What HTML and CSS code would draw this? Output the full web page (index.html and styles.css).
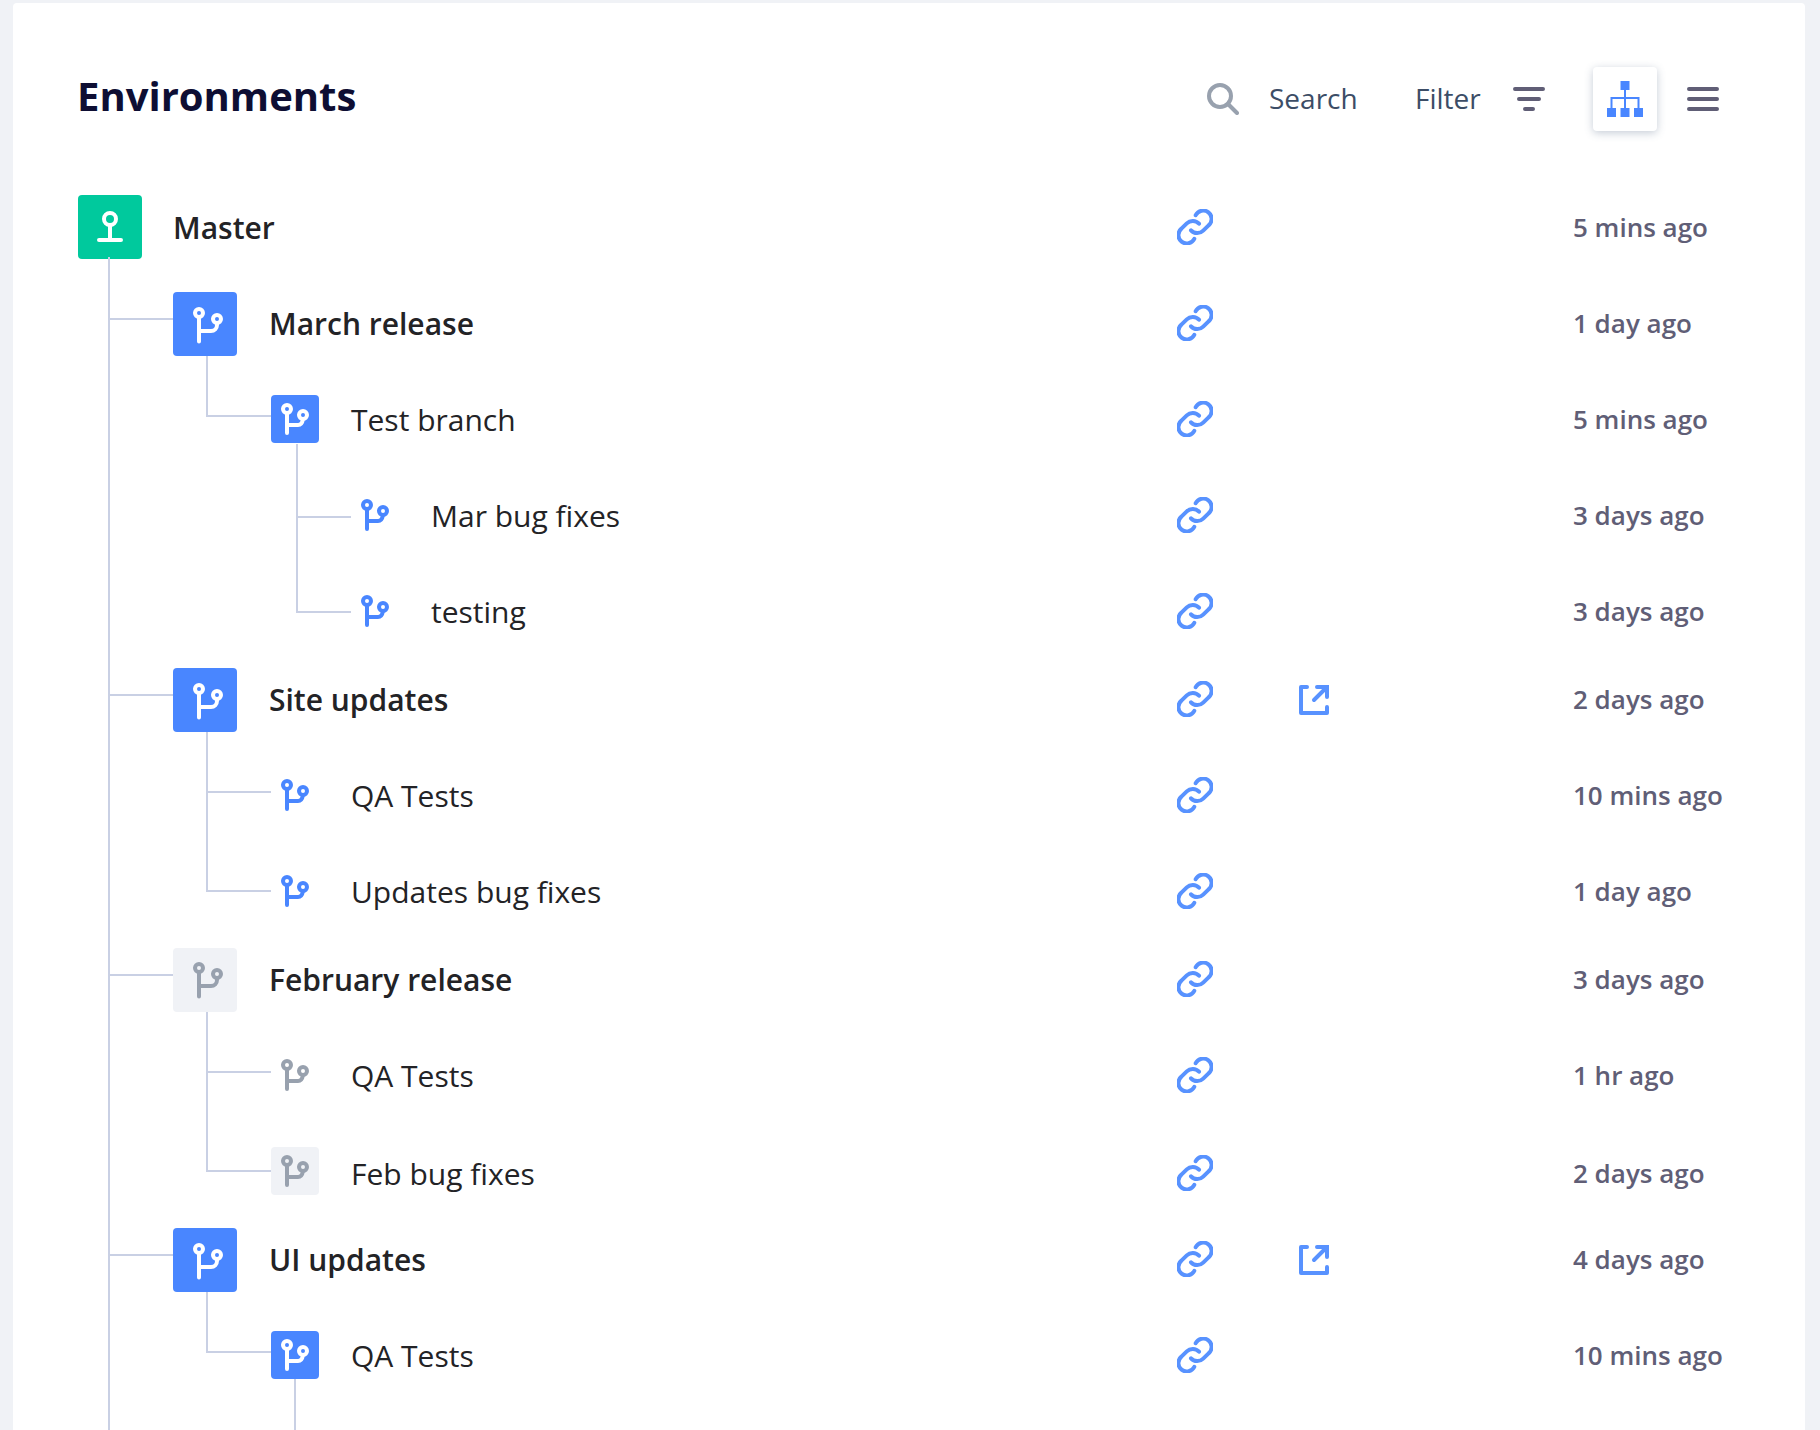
FILE: index.html
```html
<!DOCTYPE html>
<html lang="en">
<head>
<meta charset="utf-8">
<title>Environments</title>
<link rel="stylesheet" href="styles.css">
</head>
<body>
<svg class="sprite" aria-hidden="true">
  <symbol id="branch-lg" viewBox="0 0 64 64"><circle cx="26" cy="21" r="4"/><circle cx="44" cy="27" r="4"/><path d="M26 25v24.500M44 31v2a6 6 0 0 1-6 6H26"/></symbol>
  <symbol id="branch" viewBox="0 0 48 48"><circle cx="16" cy="14" r="4"/><circle cx="32" cy="20" r="4"/><path d="M16 18v20M32 24c-.6 3.800-2 6-5 6H16"/></symbol>
  <symbol id="root" viewBox="0 0 64 64"><circle cx="32" cy="24" r="6"/><path d="M32 30v15M21 45h22"/></symbol>
  <symbol id="link" viewBox="0 0 36 36"><path d="M18.700 6.200A8.400 8.400 0 1 1 31.600 16.400L26.200 21.600A8.400 8.400 0 0 1 14 21.300M17.300 29.800A8.400 8.400 0 1 1 4.400 19.600L9.800 14.400A8.400 8.400 0 0 1 22 14.700"/></symbol>
  <symbol id="open" viewBox="0 0 30 30"><path d="M8 2H2v26h26v-6"/><path class="sharp" d="M18 2h10v10M27 3L15 15"/></symbol>
</svg>

<main class="card">
  <header class="header">
    <h1 class="title">Environments</h1>
    <div class="tools">
      <svg class="icon search-icon" width="32" height="32"><circle cx="13" cy="13" r="11"/><path d="M21 21l9 9"/></svg>
      <span class="tool-label search-label">Search</span>
      <span class="tool-label filter-label">Filter</span>
      <svg class="icon bars filter-icon" width="32" height="24"><path d="M2 2h28M6 12h20M12 22h8"/></svg>
      <button class="view-button" aria-label="Tree view">
        <svg width="36" height="36"><path class="nodes" d="M13.500 0h9v9h-9zM0 27h9v9H0zM13.500 27h9v9h-9zM27 27h9v9h-9z"/><path class="wires" d="M18 9v18M4.500 27V17h27v10"/></svg>
      </button>
      <svg class="icon bars" width="32" height="24"><path d="M2 2h28M2 12h28M2 22h28"/></svg>
    </div>
  </header>

  <div class="tree">
    <svg class="connectors" width="360" height="1251"><path d="M96 78V1251M96 140h64M96 516h64M96 796h64M96 1076h64M194 177v60h64M194 553v159h64M194 613h64M194 833v159h64M194 893h64M194 1113v60h64M284 265v168h54M284 338h54M282 1200v51"/></svg>

    <div class="row root">
      <svg class="node large green"><use href="#root"/></svg><span class="name strong">Master</span>
      <svg class="icon link"><use href="#link"/></svg><span class="time">5 mins ago</span>
    </div>

    <section class="group">
      <div class="row level-1">
        <svg class="node large blue"><use href="#branch-lg"/></svg><span class="name strong">March release</span>
        <svg class="icon link"><use href="#link"/></svg><span class="time">1 day ago</span>
      </div>
      <div class="row level-2">
        <svg class="node blue"><use href="#branch"/></svg><span class="name">Test branch</span>
        <svg class="icon link"><use href="#link"/></svg><span class="time">5 mins ago</span>
      </div>
      <div class="row level-3">
        <svg class="node plain"><use href="#branch"/></svg><span class="name">Mar bug fixes</span>
        <svg class="icon link"><use href="#link"/></svg><span class="time">3 days ago</span>
      </div>
      <div class="row level-3">
        <svg class="node plain"><use href="#branch"/></svg><span class="name">testing</span>
        <svg class="icon link"><use href="#link"/></svg><span class="time">3 days ago</span>
      </div>
    </section>

    <section class="group">
      <div class="row level-1">
        <svg class="node large blue"><use href="#branch-lg"/></svg><span class="name strong">Site updates</span>
        <svg class="icon link"><use href="#link"/></svg><svg class="icon open"><use href="#open"/></svg><span class="time">2 days ago</span>
      </div>
      <div class="row level-2">
        <svg class="node plain"><use href="#branch"/></svg><span class="name">QA Tests</span>
        <svg class="icon link"><use href="#link"/></svg><span class="time">10 mins ago</span>
      </div>
      <div class="row level-2">
        <svg class="node plain"><use href="#branch"/></svg><span class="name">Updates bug fixes</span>
        <svg class="icon link"><use href="#link"/></svg><span class="time">1 day ago</span>
      </div>
    </section>

    <section class="group">
      <div class="row level-1">
        <svg class="node large gray"><use href="#branch-lg" y="-1"/></svg><span class="name strong">February release</span>
        <svg class="icon link"><use href="#link"/></svg><span class="time">3 days ago</span>
      </div>
      <div class="row level-2">
        <svg class="node plain muted"><use href="#branch"/></svg><span class="name">QA Tests</span>
        <svg class="icon link"><use href="#link"/></svg><span class="time">1 hr ago</span>
      </div>
      <div class="row level-2 lowered">
        <svg class="node gray"><use href="#branch"/></svg><span class="name">Feb bug fixes</span>
        <svg class="icon link"><use href="#link"/></svg><span class="time">2 days ago</span>
      </div>
    </section>

    <section class="group">
      <div class="row level-1">
        <svg class="node large blue"><use href="#branch-lg"/></svg><span class="name strong">UI updates</span>
        <svg class="icon link"><use href="#link"/></svg><svg class="icon open"><use href="#open"/></svg><span class="time">4 days ago</span>
      </div>
      <div class="row level-2">
        <svg class="node blue"><use href="#branch"/></svg><span class="name">QA Tests</span>
        <svg class="icon link"><use href="#link"/></svg><span class="time">10 mins ago</span>
      </div>
    </section>
  </div>
</main>
</body>
</html>
```

FILE: styles.css
```css
* { box-sizing: border-box; }

body {
  margin: 0;
  height: 1430px;
  overflow: hidden;
  padding: 3px 15px 0 13px;
  background: #f0f2f6;
  font-family: "Open Sans", sans-serif;
}

.sprite { display: none; }

.card {
  height: 1427px;
  overflow: hidden;
  background: #fff;
  border-radius: 4px 4px 0 0;
}

svg { flex: none; }

svg circle, svg path {
  fill: none;
  stroke-width: 4;
  stroke-linecap: round;
  stroke-linejoin: round;
}

.header {
  display: flex;
  justify-content: space-between;
  height: 176px;
  padding: 64px 86px 0 64px;
}

.title {
  margin: 1px 0 0;
  color: #0e0e33;
  font-size: 40px;
  font-weight: 700;
  line-height: 56px;
}

.tools { display: flex; align-items: center; height: 64px; }
.tool-label { padding-bottom: 2px; color: #3c4d66; font-size: 28px; line-height: 40px; }
.search-icon { stroke: #98a1ae; }
.search-label { width: 88px; margin-left: 30px; }
.filter-label { width: 66px; margin-left: 58px; }
.filter-icon { margin-left: 32px; }
.bars { stroke: #605e76; }

.view-button {
  display: grid;
  place-items: center;
  width: 64px;
  height: 64px;
  margin: 0 30px 0 48px;
  padding: 0;
  border: 0;
  border-radius: 4px;
  background: #fff;
  box-shadow: 0 2px 8px rgba(75, 97, 128, .32);
}
.view-button svg { overflow: visible; }
.view-button .nodes { fill: #4986ff; stroke: none; }
.view-button .wires { stroke: #4986ff; stroke-width: 2; stroke-linejoin: miter; stroke-linecap: butt; }

.tree { position: relative; }
.connectors { position: absolute; left: 0; top: 0; overflow: visible; }
.connectors path { stroke: #c9d0e4; stroke-width: 2; stroke-linecap: square; stroke-linejoin: miter; stroke-linecap: butt; }
.connectors { height: 1254px; }
.connectors path { clip-path: none; }

.group + .group { margin-top: -8px; }
.group:last-child { padding-bottom: 24px; }

.row {
  display: grid;
  grid-template-columns: auto 1fr 122px 274px 232px;
  align-items: center;
  height: 96px;
  padding-left: 65px;
}
.level-1 { padding-left: 160px; }
.level-2 { padding-left: 258px; }
.level-3 { padding-left: 338px; }

.node { width: 48px; height: 48px; margin-right: 32px; border-radius: 4px; stroke: #fff; }
.large { width: 64px; height: 64px; }
.root .node { margin-right: 31px; }
.level-1 .large { margin-top: 1px; }
.green { background: #00c99d; }
.blue { background: #4986ff; }
.gray { background: #f0f2f6; stroke: #98a1ae; }
.plain { stroke: #4986ff; }
.muted { stroke: #98a1ae; }

.name { padding-top: 2px; color: #232326; font-size: 30px; line-height: 40px; white-space: nowrap; }
.strong { font-weight: 600; }
.link, .open { stroke: #5892ff; }
.link { width: 36px; height: 36px; grid-column: 3; }
.open { width: 30px; height: 30px; grid-column: 4; margin-top: 2px; }
#open .sharp { stroke-linejoin: miter; }
.time { grid-column: 5; color: #605e76; font-size: 26px; font-weight: 600; line-height: 36px; white-space: nowrap; }

.lowered { padding-top: 4px; }
.lowered .node { margin-top: -4px; }
```
